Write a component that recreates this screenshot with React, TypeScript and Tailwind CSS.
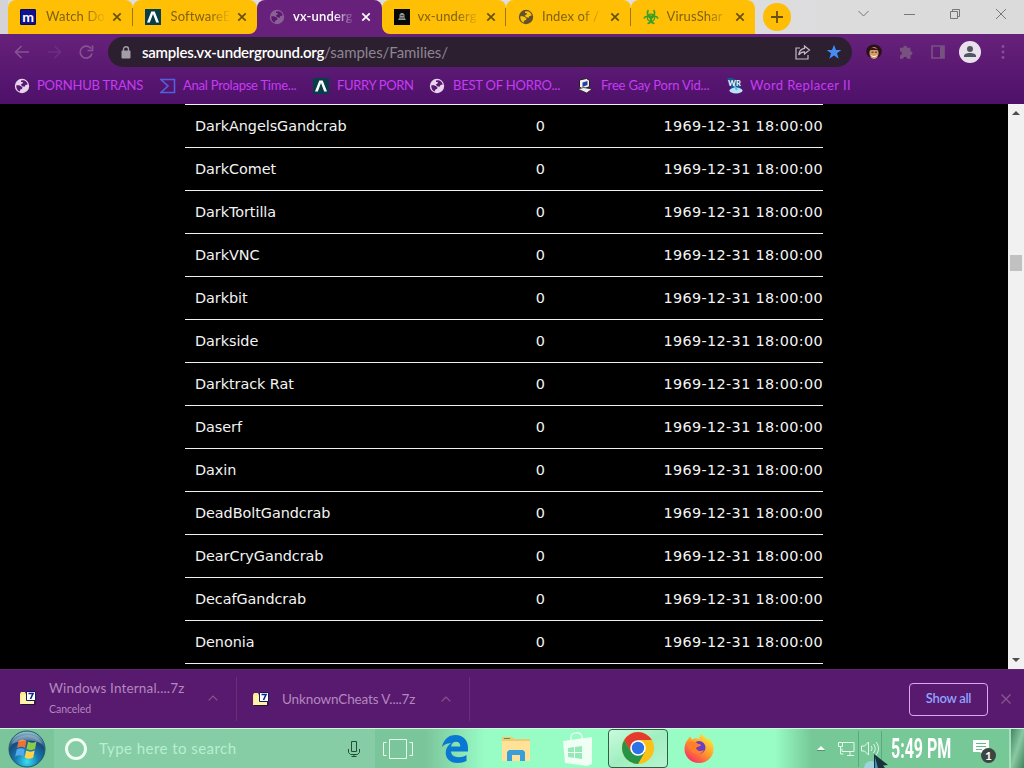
import type { ReactNode } from "react";
import { clsx } from "clsx";

const families = [
  "DarkAngelsGandcrab",
  "DarkComet",
  "DarkTortilla",
  "DarkVNC",
  "Darkbit",
  "Darkside",
  "Darktrack Rat",
  "Daserf",
  "Daxin",
  "DeadBoltGandcrab",
  "DearCryGandcrab",
  "DecafGandcrab",
  "Denonia",
];

function Globe({ className, landClass = "fill-[#5b1870]" }: { className?: string; landClass?: string }) {
  return (
    <svg viewBox="0 0 16 16" className={clsx("w-4 h-4 shrink-0", className)}>
      <circle cx="8" cy="8" r="7.2" fill="currentColor" />
      <path
        d="M2.3 7.200 5 7.300 7.200 8.300 8.500 9.500 8 11l-1.700.6-.5 2C3.500 12.700 1.900 10 2.300 7.200ZM7 2.400l2.500-.2c2.200.5 3.800 2.200 4.200 4.300L11.500 7l-.9 1.800-2.500-.6L6.800 6.500l2-1.200L8.800 4 7 4.100Z"
        className={landClass}
      />
    </svg>
  );
}

function LambdaIcon({ className }: { className?: string }) {
  return (
    <svg viewBox="0 0 16 16" className={clsx("w-4 h-4 shrink-0", className)}>
      <rect width="16" height="16" fill="#073f49" />
      <path d="M2 13.500 6.300 2.500h3.400l4.300 11h-2.800L8 5 4.800 13.500Z" fill="#fff" />
    </svg>
  );
}

function MIcon() {
  return (
    <div className="w-4 h-4 shrink-0 bg-[#10128f] rounded-[1px] border border-[#0b0a62] flex items-center justify-center text-white font-bold text-[14px] leading-none tracking-normal pb-px">
      m
    </div>
  );
}

function CoffinIcon() {
  return (
    <svg viewBox="0 0 16 16" className="w-4 h-4 shrink-0">
      <rect width="16" height="16" fill="#070707" />
      <path d="M5.500 8.500v-3L7 4h2l1.500 1.500v3l1.500 2.500H4Z" fill="#8f9695" />
      <path d="M6.500 6.500h3M5.500 9h5" stroke="#3b4140" />
    </svg>
  );
}

function BiohazardIcon() {
  return (
    <svg viewBox="0 0 16 16" className="w-4 h-4 shrink-0" fill="none" stroke="#35a12b">
      <path d="M5.500 1.200a3.600 3.600 0 1 0 5 0" strokeWidth="1.700" />
      <path d="M1 9.500a3.600 3.600 0 1 1 3.500 5" strokeWidth="1.700" />
      <path d="M15 9.500a3.600 3.600 0 1 0-3.500 5" strokeWidth="1.700" />
      <circle cx="8" cy="8.800" r="3.600" strokeWidth="1.300" />
      <circle cx="8" cy="8.500" r="1.300" fill="#35a12b" />
    </svg>
  );
}

type TabProps = {
  icon: ReactNode;
  title: string;
  active?: boolean;
  divider?: boolean;
  textClass?: string;
};

function Tab({ icon, title, active, divider, textClass }: TabProps) {
  return (
    <div
      className={clsx(
        "relative w-[124.5px] h-[34px] flex items-center pl-3 shrink-0 rounded-t-lg",
        active ? "bg-[#67217b] text-white font-semibold" : "bg-[#ffbf05] text-[#806111]"
      )}
    >
      {icon}
      <div className="ml-2 w-[62px] shrink-0 whitespace-nowrap mask-r-from-65%">
        <span className={textClass}>{title}</span>
      </div>
      <svg viewBox="0 0 10 10" className="w-2.5 h-2.5 ml-1.5 shrink-0">
        <path
          d="M1.3 1.3l7.4 7.4M8.7 1.3 1.3 8.7"
          stroke={active ? "#fff" : "#66500f"}
          strokeWidth="1.7"
        />
      </svg>
      {divider && <div className="absolute right-0 top-2 w-px h-[18px] bg-[#9a7710]" />}
    </div>
  );
}

function TabStrip() {
  return (
    <div className="h-[34px] flex bg-linear-to-r from-[#d4d4d6] via-[#dedddf] to-[#dbdbdc] text-[13px] tracking-[0.15px]">
      {/* purple shows under the rounded corners next to the active tab */}
      <div className="ml-2 flex w-[747px] rounded-tr-lg overflow-hidden bg-linear-to-b from-[#dedddf] from-50% to-[#67217b] to-50%">
        <Tab icon={<MIcon />} title="Watch Do" divider textClass="ml-0.5" />
        <div className="flex rounded-br-lg overflow-hidden shrink-0">
          <Tab icon={<LambdaIcon />} title="SoftwareE" textClass="ml-0.5" />
        </div>
        <Tab icon={<Globe className="text-[#8b6095]" />} title="vx-underg" active />
        <div className="flex rounded-bl-lg overflow-hidden shrink-0">
          <Tab icon={<CoffinIcon />} title="vx-underg" divider />
        </div>
        <Tab
          icon={<Globe className="text-[#62522c]" landClass="fill-[#fbc00a]" />}
          title="Index of /"
          divider
        />
        <Tab icon={<BiohazardIcon />} title="VirusShar" />
      </div>
      <div className="mt-[3px] ml-2 w-7 h-7 rounded-full bg-[#ffbd05] flex items-center justify-center">
        <svg viewBox="0 0 12 12" className="w-3 h-3">
          <path d="M6 0v12M0 6h12" stroke="#65500e" strokeWidth="1.8" />
        </svg>
      </div>
      <svg viewBox="0 0 160 28" className="w-40 h-7 ml-auto mr-[11px]" fill="none" stroke="#77777a" strokeWidth="1">
        <path d="M5.500 11l5 5 5-5" />
        <path d="M51 14.500h11" />
        <path d="M97.500 11.500h7v7h-7zM99.500 11.500v-2h7v7h-2" />
        <path d="M143 9l10 10M153 9l-10 10" />
      </svg>
    </div>
  );
}

function Toolbar() {
  return (
    <div className="h-9 flex items-center">
      <svg viewBox="0 0 108 36" className="w-[108px] h-9 shrink-0" fill="none" strokeWidth="1.7">
        <path d="M29 18H16M21.500 12 15.500 18l6 6" stroke="#865391" />
        <path d="M48 18h12M54.500 12l6 6-6 6" stroke="#6f2e7e" />
        <path d="M91 14.500a6 6 0 1 0 1 5" stroke="#865391" />
        <path d="M92.500 11.500v5h-5" stroke="#865391" />
      </svg>
      <div className="w-[744px] h-[30px] rounded-full bg-[#2c2030] flex items-center pl-[13px] pr-2.5 text-[15px] shrink-0">
        <svg viewBox="0 0 10 13" className="w-2.5 h-[13px]">
          <rect x="0.500" y="4.500" width="9" height="8" rx="1" fill="#a49da7" />
          <path d="M2.500 5V3.200a2.500 2.500 0 0 1 5 0V5" fill="none" stroke="#a49da7" strokeWidth="1.400" />
        </svg>
        <div className="ml-[11px] whitespace-nowrap flex">
          <span className="text-white font-semibold tracking-[-0.23px]">samples.vx-underground.org</span>
          <span className="text-[#8d8591] tracking-[-0.05px]">/samples/Families/</span>
        </div>
        <svg viewBox="0 0 18 18" className="w-[18px] h-[18px] ml-auto" fill="none" stroke="#c4b9c8" strokeWidth="1.200">
          <path d="M6 5H2v11h12v-4" />
          <path d="M10.500 3l5 4-5 4V8.800C7.500 8.800 6 10 4.700 12c.3-3.600 2.300-6 5.800-6.600Z" />
        </svg>
        <svg viewBox="0 0 16 16" className="w-4 h-4 ml-3.5">
          <path d="M8 .8 10 6h5.300L11 9.300l1.700 5.400L8 11.500l-4.700 3.200L5 9.300.7 6H6Z" fill="#448cf3" />
        </svg>
      </div>
      <svg viewBox="0 0 16 16" className="w-4 h-4 ml-3.5">
        <ellipse cx="8" cy="7.500" rx="7.800" ry="7" fill="#251216" />
        <ellipse cx="8" cy="9" rx="4.600" ry="6" fill="#d59a6d" />
        <path d="M3 7c1-3 3-4 5-3s4 0 5 3l-2-1H5Z" fill="#321611" />
        <path d="M5.500 8.200h2M9 8.200h2" stroke="#4b221b" />
        <path d="M5.500 11.500c1.500 1.500 3.500 1.500 5 0" stroke="#fff" fill="none" />
      </svg>
      <svg viewBox="0 0 16 16" className="w-4 h-4 ml-4" fill="#77517f">
        <path d="M2 3.700h3.200a2 2 0 0 1 4 0h3.300v3.500a2 2 0 0 1 0 4v3.500H9.200a2 2 0 0 0-4 0H2v-3.500a2 2 0 0 0 0-4Z" />
      </svg>
      <svg viewBox="0 0 16 16" className="w-4 h-4 ml-4">
        <path d="M2 2h12v12H2Z" fill="none" stroke="#77517f" strokeWidth="1.700" />
        <path d="M10 2h4v12h-4Z" fill="#77517f" />
      </svg>
      <svg viewBox="0 0 22 22" className="w-[22px] h-[22px] ml-[13px]">
        <circle cx="11" cy="11" r="11" fill="#e8e1ed" />
        <circle cx="11" cy="8" r="3" fill="#505661" />
        <path d="M5 16v-1c0-2 2.500-3 6-3s6 1 6 3v1Z" fill="#505661" />
      </svg>
      <svg viewBox="0 0 4 16" className="w-1 h-4 ml-5" fill="#84558d">
        <circle cx="2" cy="2.500" r="1.400" />
        <circle cx="2" cy="8" r="1.400" />
        <circle cx="2" cy="13.500" r="1.400" />
      </svg>
    </div>
  );
}

function Bookmarks() {
  return (
    <div className="h-[34px] flex items-center pb-0.5 text-[13px] text-[#c53cf4] whitespace-nowrap">
      <div className="w-[145px] pl-3.5 flex items-center shrink-0">
        <Globe className="text-[#e5d5ed]" />
        <span className="ml-[7px] tracking-[-0.2px]">PORNHUB TRANS</span>
      </div>
      <div className="w-[168px] pl-[15px] flex items-center shrink-0">
        <svg viewBox="0 0 16 16" className="w-4 h-4" fill="none" stroke="#5061dc" strokeWidth="1.600">
          <path d="M1 1.500h13.500v13H1L8 8Z" />
        </svg>
        <span className="ml-[7px] tracking-[-0.23px]">Anal Prolapse Time...</span>
      </div>
      <div className="w-[116px] flex items-center shrink-0">
        <LambdaIcon />
        <span className="ml-2 tracking-[-0.35px]">FURRY PORN</span>
      </div>
      <div className="w-[148px] flex items-center shrink-0">
        <Globe className="text-[#e5d5ed]" />
        <span className="ml-2 tracking-[-0.2px]">BEST OF HORRO...</span>
      </div>
      <div className="w-[150px] flex items-center shrink-0">
        <svg viewBox="0 0 16 16" className="w-4 h-4">
          <path d="M2.500 2 9.500.5l3 2v6l-6.500 3L2.500 9Z" fill="#f4f2e8" stroke="#222" />
          <path d="m5.500 4.500 5-1.500v4l-5 2Z" fill="#253daa" />
          <path d="m.7 11 6-1.500 8.500 1.500-5.500 4Z" fill="#eee" stroke="#222" strokeWidth="0.800" />
        </svg>
        <span className="ml-2 tracking-[-0.18px]">Free Gay Porn Vid...</span>
      </div>
      <div className="flex items-center">
        <svg viewBox="0 0 16 16" className="w-4 h-4">
          <path d="M0 0h5l9 4-1 7-9-1Z" fill="#165691" />
          <ellipse cx="9" cy="12.500" rx="6.500" ry="3" fill="#b9e3f7" />
          <path d="m7 7 3 5" stroke="#60b9e9" strokeWidth="2" />
          <text x="1" y="7.500" fontSize="7.500" fontWeight="700" fill="#fff">WR</text>
        </svg>
        <span className="ml-[7px] tracking-[0.4px]">Word Replacer II</span>
      </div>
    </div>
  );
}

function Listing() {
  return (
    <div className="h-[565px] flex bg-black overflow-hidden">
      <div className="ml-[185px] w-[638px] border-t border-[#f0f0f0] font-['Verdana','DejaVu_Sans',sans-serif] text-[14.4px] text-[#f4f4f4] tracking-[0.35px]">
        {families.map((name) => (
          <div key={name} className="h-[43px] flex items-center pt-0.5 border-b border-[#f0f0f0]">
            <div className="w-[341px] pl-2.5 tracking-[-0.05px]">{name}</div>
            <div className="w-[29px] text-center">0</div>
            <div className="ml-auto whitespace-nowrap">1969-12-31 18:00:00</div>
          </div>
        ))}
      </div>
      <div className="ml-auto w-4 bg-[#f1f1f1] flex flex-col items-center">
        <svg viewBox="0 0 8 4" className="w-2 h-1 mt-[7px] shrink-0">
          <path d="m0 4 4-4 4 4Z" fill="#4d4d4d" />
        </svg>
        <div className="mt-[140px] w-3 h-4 bg-[#c1c1c1]" />
        <svg viewBox="0 0 8 4" className="w-2 h-1 mt-auto mb-[7px] shrink-0">
          <path d="m0 0 4 4 4-4Z" fill="#4d4d4d" />
        </svg>
      </div>
    </div>
  );
}

function ArchiveIcon() {
  return (
    <svg viewBox="0 0 16 14" className="w-4 h-3.5 shrink-0">
      <path d="M0 3 1 1h4l1 2v10H0Z" fill="#ffe98e" />
      <path d="M1 4h13v9H1Z" fill="#fff2aa" />
      <path d="M1 13.500h14V10" stroke="#24132c" fill="none" />
      <path d="M6.500.5h9v9h-9Z" fill="#fff" stroke="#111b60" />
      <path d="M8.500 2.500H13L10.500 8" fill="none" stroke="#14208a" strokeWidth="1.600" />
    </svg>
  );
}

type DownloadProps = { name: string; status?: string; nameClass?: string };

function Download({ name, status, nameClass }: DownloadProps) {
  return (
    <div className="flex items-center shrink-0 text-[#b487bf]">
      <ArchiveIcon />
      <div className="ml-[13px] w-[153px] whitespace-nowrap">
        <div className={clsx("text-[13.5px] leading-[18px]", nameClass)}>{name}</div>
        {status && (
          <div className="mt-[5px] text-[10.5px] leading-[14px] tracking-[-0.05px]">{status}</div>
        )}
      </div>
      <svg viewBox="0 0 10 6" className="w-2.5 h-1.5 ml-1.5">
        <path d="m.7 5.300 4.300-4.300 4.300 4.300" fill="none" stroke="#89568d" strokeWidth="1.200" />
      </svg>
    </div>
  );
}

function DownloadShelf() {
  return (
    <div className="h-[59px] bg-[#571a6e] border-t border-[#5e2771] flex items-center">
      <div className="w-[236px] pl-5 pb-[3px]">
        <Download name="Windows Internal....7z" status="Canceled" nameClass="tracking-[0.17px]" />
      </div>
      <div className="w-px h-[44px] bg-[#693079]" />
      <div className="w-[232px] pl-4 pb-px">
        <Download name="UnknownCheats V....7z" nameClass="tracking-[-0.13px]" />
      </div>
      <div className="w-px h-[44px] bg-[#693079]" />
      <div className="ml-auto w-[79px] h-[33px] rounded border border-[#e2a4ef] text-[#91a2ff] text-[13px] font-semibold tracking-[-0.3px] flex items-center justify-center">
        Show all
      </div>
      <svg viewBox="0 0 10 10" className="w-2.5 h-2.5 ml-[13px] mr-[13px]">
        <path d="m.5.5 9 9M9.500.5l-9 9" stroke="#87588e" strokeWidth="1.300" />
      </svg>
    </div>
  );
}

function StartOrb() {
  return (
    <svg viewBox="0 0 38 38" className="w-[38px] h-[38px]">
      <defs>
        <radialGradient id="orb" cx="50%" cy="85%" r="80%">
          <stop offset="0" stopColor="#38e1f4" />
          <stop offset="0.4" stopColor="#177bb0" />
          <stop offset="0.75" stopColor="#174b7b" />
          <stop offset="1" stopColor="#8bb7c7" />
        </radialGradient>
      </defs>
      <circle cx="19" cy="19" r="18" fill="url(#orb)" stroke="#235970" />
      <path d="M10.500 11c3-2 5.500-2 8 0l-1.500 7c-2.500-1.800-5-1.800-8 0Z" fill="#ef7136" />
      <path d="M20 11.500c3 1.700 5.500 1.700 8.500 0L27 19c-3 1.500-5.500 1.500-8.500 0Z" fill="#8bcb4c" />
      <path d="M8.700 19.500c3-1.700 5.500-1.700 8 0l-1.500 7c-2.500-1.700-5-1.700-8 0Z" fill="#53a9ec" />
      <path d="M18.200 20.500c3 1.500 5.500 1.500 8.500 0l-1.500 7c-3 1.700-5.500 1.700-8.500 0Z" fill="#ffd24a" />
      <path d="M4 14C7 4 29 0 34 14 25 9 13 10 4 14Z" fill="#fff" opacity="0.280" />
    </svg>
  );
}

function Edge() {
  return (
    <svg viewBox="0 0 26 28" className="w-[26px] h-7">
      <path
        d="M0 12C1.500 4.500 6.500 0 13.500 0 21.500 0 26 5.500 26 13v3.500H9c.2 3.700 3.200 5.700 7.500 5.700 3 0 5.700-.7 8-2.200V26c-2.500 1.300-5.500 2-9 2C8 28 3.700 23.500 3.700 17.500c0-4 2-7.300 5.500-9.300C5 8 2 9.500 0 12Zm9-.4h9.300c0-3-1.500-4.800-4.300-4.800-2.700 0-4.500 1.800-5 4.800Z"
        fill="#0878d3"
      />
    </svg>
  );
}

function Explorer() {
  return (
    <svg viewBox="0 0 28 26" className="w-7 h-[26px]">
      <path d="M0 1h10l2 2h16v22H0Z" fill="#f0c870" />
      <path d="M0 5h28v20H0Z" fill="#ffe198" />
      <path d="M2 2.500h6" stroke="#4e9a57" />
      <path d="M5 25V16l2-2h14l2 2v9h-5v-6h-8v6Z" fill="#3a9ed8" />
    </svg>
  );
}

function Store() {
  return (
    <svg viewBox="0 0 30 34" className="w-[30px] h-[34px]">
      <path d="M8 10V5c0-5 10-6 11 0v3" fill="none" stroke="#e7fff0" strokeWidth="1.500" />
      <path d="m0 9 29-4v27l-5 2L2 31Z" fill="#effff4" />
      <path d="m5 16 6-1v5H5Zm7-1 7-1v6h-7Zm-7 6h6v5l-6-1Zm7 0h7v6l-7-1Z" fill="#96e9b7" />
    </svg>
  );
}

function Chrome() {
  return (
    <svg viewBox="0 0 32 32" className="w-8 h-8">
      <circle cx="16" cy="16" r="16" fill="#fbc116" />
      <path d="M2.150 8A16 16 0 0 1 29.850 8H16l-7 12Z" fill="#e33b2e" />
      <path d="M2.150 8A16 16 0 0 0 16 32l6.900-12H9.100Z" fill="#269447" />
      <circle cx="16" cy="16" r="7.800" fill="#fff" />
      <circle cx="16" cy="16" r="6.200" fill="#2d73e7" />
    </svg>
  );
}

function Firefox() {
  return (
    <svg viewBox="0 0 32 32" className="w-8 h-8">
      <defs>
        <linearGradient id="fox" x1="0.850" y1="0.100" x2="0.200" y2="0.950">
          <stop offset="0" stopColor="#ffe63e" />
          <stop offset="0.500" stopColor="#ff952a" />
          <stop offset="1" stopColor="#f92d62" />
        </linearGradient>
      </defs>
      <path
        d="M4.500 8 7 4.500 9 7.500l4-1.500 3 1 1-5c3 1 5 3 6 5l2-1c4 3 6 7 5.500 11a14.500 14 0 0 1-29 0C1.500 14 2.500 10 4.500 8Z"
        fill="url(#fox)"
      />
      <circle cx="16" cy="15.500" r="6.500" fill="#6a3fc5" />
      <path d="M5 11c4-2 7-2 10 1 2 0 3 .5 3 1.500-2 1.500-4 1-5 2.500 1 3 4 4 8 2-2 5-9 6-13 1-2-2-3-5-3-8Z" fill="#ff7f2c" />
    </svg>
  );
}

function Tray() {
  return (
    <div className="ml-auto flex items-center h-full">
      <svg viewBox="0 0 70 39" className="w-[70px] h-[39px]" fill="none" stroke="#e4f9ec">
        <path d="m5 21 4-4 4 4Z" fill="#fff" stroke="none" />
        <path d="M5 21.500h8" stroke="#438965" strokeWidth="0.800" />
        <path d="M31 13.500h11v9H30v-3M35 26.500h7M38 23v3M26.500 13.500h4v4h-4zM28.500 18v7h3" />
        <path d="M46.500 2v36M69.500 2v36" stroke="#5baa7f" />
        <path d="M49.500 17h3l4-4v13l-4-4h-3ZM59 17c1.300 1.500 1.300 3.500 0 5M61.500 15c2.300 3 2.300 6 0 9M64 13c3.300 4 3.300 9 0 13" />
      </svg>
      <div className="ml-[9px] w-[62px] h-[30px] flex items-center">
        <span className="origin-left scale-x-[0.57] font-['Roboto',sans-serif] font-bold text-[28px] leading-none text-white whitespace-nowrap">
          5:49 PM
        </span>
      </div>
      <svg viewBox="0 0 30 30" className="w-[30px] h-[30px] ml-[19px]">
        <path d="M1 6h16v12h-5v4l-4-4H1Z" fill="#fff" />
        <path d="M4 9.500h10M4 12.500h10M4 15.500h6" stroke="#67b98b" />
        <circle cx="16.500" cy="21.500" r="7.500" fill="#3c4541" />
        <text x="16.500" y="26" textAnchor="middle" fontSize="12" fontWeight="700" fill="#fff">1</text>
      </svg>
      <div className="ml-[7px] w-[15px] h-full border-l-2 border-[#a5dfbc] bg-linear-to-br from-[#438766] via-[#89c9a2] to-[#3f835e]" />
    </div>
  );
}

function Taskbar() {
  return (
    <div className="relative h-10 border-t border-[#d2f5df] bg-[linear-gradient(to_right,#7bc59a_0,#7bc59a_425px,#98fcc5_485px,#98fcc5_775px,#76c897_812px,#76c897_100%)] flex items-center">
      <div className="w-[54px] flex justify-center shrink-0">
        <StartOrb />
      </div>
      <div className="w-[321px] h-full bg-[#86cca5] flex items-center pl-[11px] shrink-0">
        <div className="w-[22px] h-[22px] rounded-full border-[3px] border-[#f1fff4]" />
        <span className="ml-3 text-[15px] tracking-[0.45px] text-[#b8efd0]">Type here to search</span>
        <svg viewBox="0 0 12 18" className="w-3 h-[18px] ml-auto mr-[15px]" fill="none" stroke="#244f37">
          <path d="M3.500 1.500h5v10h-5zM.5 9v3.500l2 2h7l2-2V9M6 14.500v2M3.500 16.500h5" />
        </svg>
      </div>
      <div className="w-[46px] flex justify-center shrink-0">
        <svg viewBox="0 0 32 22" className="w-8 h-[22px]" fill="none" stroke="#e6faed">
          <path d="M7.500 1.500h17v19h-17zM4.500 4.500h-3v13h3M27.500 4.500h3v13h-3" />
        </svg>
      </div>
      <div className="ml-[4px] w-[60px] flex justify-center">
        <Edge />
      </div>
      <div className="w-[62px] flex justify-center">
        <Explorer />
      </div>
      <div className="w-[61px] flex justify-center">
        <Store />
      </div>
      <div className="w-[60px] h-full flex justify-center items-center border border-[#315e46] rounded-sm bg-linear-to-br from-[#c9fbdd] via-[#a0efc0] to-[#b6f5d0] pb-px">
        <Chrome />
      </div>
      <div className="w-[62px] flex justify-center pb-0.5">
        <Firefox />
      </div>
      <Tray />
      {/* mouse pointer over the volume icon */}
      <svg viewBox="0 0 26 14" className="absolute left-[862px] bottom-0 w-[26px] h-3.5">
        <circle cx="9" cy="14" r="7" fill="#9dd3dc" />
        <path d="m12 0 14 11-5 .5 2 2.500H12Z" fill="#17343d" />
        <path d="m13 3 3 11h-3Z" fill="#4b8ebd" />
      </svg>
    </div>
  );
}

export default function App() {
  return (
    <div className="w-[1024px] h-[768px] overflow-hidden bg-black font-['Comic_Sans_MS','Lato',sans-serif]">
      <TabStrip />
      <div className="h-[70px] bg-linear-to-b from-[#67217b] to-[#4e1069]">
        <Toolbar />
        <Bookmarks />
      </div>
      <Listing />
      <DownloadShelf />
      <Taskbar />
    </div>
  );
}
